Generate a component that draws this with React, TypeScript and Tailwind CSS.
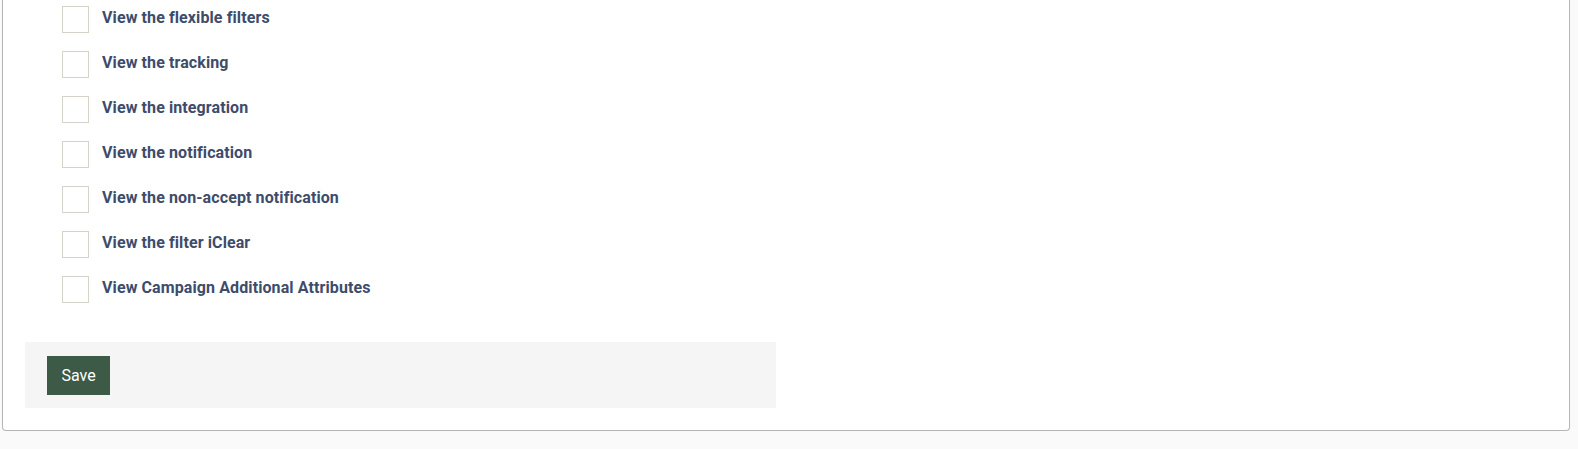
import React from "react";

const items = [
  "View the flexible filters",
  "View the tracking",
  "View the integration",
  "View the notification",
  "View the non-accept notification",
  "View the filter iClear",
  "View Campaign Additional Attributes",
];

export default function App() {
  return (
    <div className="min-h-[449px] w-[1578px] bg-[#fafafa] font-['Roboto',sans-serif]">
      <div className="ml-[2px] w-[1568px] rounded-b-[4px] border-x border-b border-[#b5b5b5] bg-white pb-[22px] pl-[22px]">
        <div className="ml-[37px] flex flex-col gap-[18px] pt-[6px]">
          {items.map((t) => (
            <label key={t} className="flex items-start gap-[13px]">
              <span className="h-[27px] w-[27px] shrink-0 border border-[#d6d2cc] bg-white" />
              <span className="mt-[2px] text-[16px] leading-5 font-bold tracking-[0.1px] text-[#3e4c6b]">{t}</span>
            </label>
          ))}
        </div>
        <div className="mt-[39px] h-[66px] w-[751px] bg-[#f5f5f5] pl-[22px] pt-[14px]">
          <button className="h-[39px] w-[63px] bg-[#3d5a46] text-[16px] leading-[37px] text-white">Save</button>
        </div>
      </div>
    </div>
  );
}
